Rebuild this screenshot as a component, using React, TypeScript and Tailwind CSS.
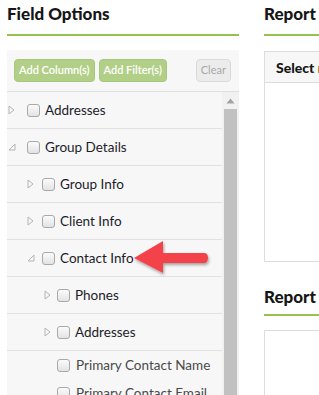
import React from "react";

const font = { fontFamily: "Lato, 'Open Sans', sans-serif" };

function Tri({ open }: { open?: boolean }) {
  return open ? (
    <svg width="8" height="8" viewBox="0 0 8 8" className="shrink-0">
      <path d="M7 1 L7 7 L1 7 Z" fill="none" stroke="#b5b5b5" strokeWidth="1" />
    </svg>
  ) : (
    <svg width="7" height="10" viewBox="0 0 7 10" className="shrink-0">
      <path d="M1 1 L6 5 L1 9 Z" fill="none" stroke="#b5b5b5" strokeWidth="1" />
    </svg>
  );
}

function Box() {
  return (
    <span className="block w-[13px] h-[13px] shrink-0 rounded-[3px] border border-[#a9a9a9] bg-gradient-to-b from-[#fbfbfb] to-[#e3e3e3]" />
  );
}

const TRI_X = [8, 27, 44];
const CB_X = [27, 42, 57];

function Row({ level, label, open }: { level: number; label: string; open?: boolean }) {
  const tx = TRI_X[level];
  const cx = CB_X[level];
  return (
    <div className="h-[37px] border-b border-[#e1e1e1] flex items-center" style={{ paddingLeft: tx - 7 }}>
      <span className="w-[8px] flex justify-start">
        <Tri open={open} />
      </span>
      <span style={{ marginLeft: cx - tx - 8 }}><Box /></span>
      <span className="ml-[5px] text-[13.5px] text-[#1c1c2a]">{label}</span>
    </div>
  );
}

function Leaf({ label }: { label: string }) {
  return (
    <div className="h-[28px] flex items-center pl-[50px]">
      <Box />
      <span className="ml-[6px] text-[13.5px] text-[#4a4a4a] whitespace-nowrap">{label}</span>
    </div>
  );
}

export default function App() {
  return (
    <div className="relative w-[319px] h-[395px] overflow-hidden bg-white" style={font}>
      <div className="flex">
        <div className="w-[232px] ml-[7px] shrink-0">
          <div className="h-[34px] pt-[1px] text-[17px] font-black text-[#161616]">Field Options</div>
          <div className="h-[2px] bg-[#95c24f]" />
          <div className="mt-[14px] bg-[#f7f7f7]">
            <div className="h-[42px] flex items-center px-[7px] border-b border-[#dedede]">
              <button className="h-[23px] px-[4px] rounded-[4px] bg-[#b2cf88] text-white text-[11px] font-semibold border border-[#a8c77c]">Add Column(s)</button>
              <button className="ml-[4px] h-[23px] px-[4px] rounded-[4px] bg-[#b2cf88] text-white text-[11px] font-semibold border border-[#a8c77c]">Add Filter(s)</button>
              <button className="ml-auto mr-[1px] h-[23px] px-[4px] rounded-[4px] bg-[#ececec] text-[#a8a8a8] text-[11px] border border-[#dadada]">Clear</button>
            </div>
            <div className="flex h-[310px]">
              <div className="flex-1 overflow-hidden">
                <Row level={0} label="Addresses" />
                <Row level={0} label="Group Details" open />
                <Row level={1} label="Group Info" />
                <Row level={1} label="Client Info" />
                <Row level={1} label="Contact Info" open />
                <Row level={2} label="Phones" />
                <Row level={2} label="Addresses" />
                <Leaf label="Primary Contact Name" />
                <Leaf label="Primary Contact Email" />
              </div>
              <div className="w-[17px] bg-[#f1f1f1] flex flex-col items-center">
                <svg width="9" height="6" viewBox="0 0 9 6" className="mt-[6px]">
                  <path d="M0.5 5.5 L4.5 0.5 L8.5 5.5 Z" fill="#a3a3a3" />
                </svg>
                <div className="mt-[5px] w-[13px] flex-1 bg-[#c1c1c1]" />
              </div>
            </div>
          </div>
        </div>
        <div className="ml-[25px] w-[120px] shrink-0">
          <div className="h-[34px] pt-[1px] text-[17px] font-black text-[#161616]">Report</div>
          <div className="h-[2px] bg-[#95c24f]" />
          <div className="mt-[15px] h-[211px] border border-[#dddddd]">
            <div className="h-[31px] bg-[#f7f7f7] border-b border-[#dddddd] flex items-center pl-[11px] text-[14px] font-black text-[#161616] whitespace-nowrap">Select report fields</div>
          </div>
          <div className="mt-[21px] h-[31px] pt-[1px] text-[17px] font-black text-[#161616]">Report</div>
          <div className="h-[2px] bg-[#95c24f]" />
          <div className="mt-[14px] h-[80px] border border-[#dddddd]" />
        </div>
      </div>
      <svg className="absolute left-[130px] top-[236px]" width="84" height="42" viewBox="0 0 84 42">
        <defs>
          <filter id="sh" x="-20%" y="-30%" width="140%" height="160%">
            <feDropShadow dx="1" dy="2" stdDeviation="1.5" floodColor="#000" floodOpacity="0.35" />
          </filter>
        </defs>
        <g filter="url(#sh)">
          <path d="M4 22 L33 5 L33 17 L74 17 Q78 17 78 22 Q78 27 74 27 L33 27 L33 37 Z" fill="#f4434b" />
        </g>
      </svg>
    </div>
  );
}
